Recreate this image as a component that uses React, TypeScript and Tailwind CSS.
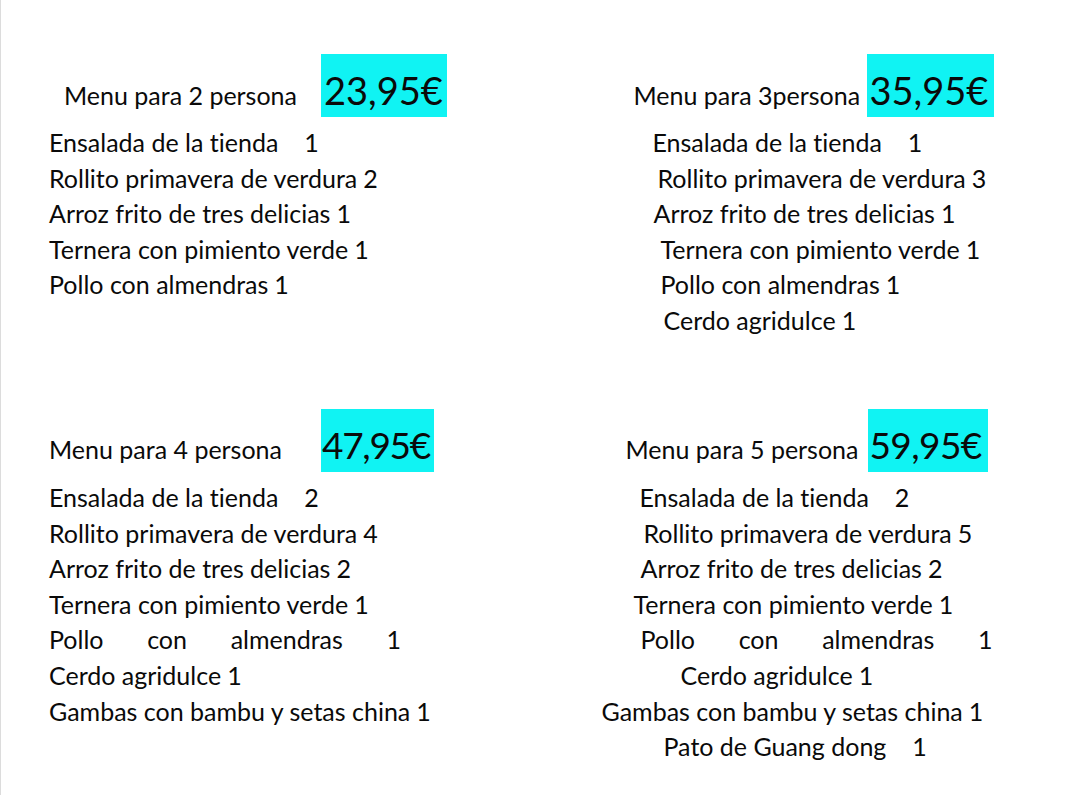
type Item = { text: string; qty: string; indent: string; gap?: string }

interface Menu {
  title: string
  price: string
  labelBox: string
  priceBox: string
  items: Item[]
  spread?: string
}

const menus: Menu[] = [
  {
    title: 'Menu para 2 persona',
    price: '23,95€',
    labelBox: 'ml-[63px] w-[257px]',
    priceBox: 'w-[126px] pl-[3px] text-[38px]',
    items: [
      { text: 'Ensalada de la tienda', qty: '1', indent: 'ml-[48px]', gap: 'ml-[26px]' },
      { text: 'Rollito primavera de verdura', qty: '2', indent: 'ml-[48px]' },
      { text: 'Arroz frito de tres delicias', qty: '1', indent: 'ml-[48px]' },
      { text: 'Ternera con pimiento verde', qty: '1', indent: 'ml-[48px]' },
      { text: 'Pollo con almendras', qty: '1', indent: 'ml-[48px]' },
    ],
  },
  {
    title: 'Menu para 3persona',
    price: '35,95€',
    labelBox: 'ml-[93px] w-[233px]',
    priceBox: 'w-[127px] pl-[3px] text-[38px]',
    items: [
      { text: 'Ensalada de la tienda', qty: '1', indent: 'ml-[112px]', gap: 'ml-[26px]' },
      { text: 'Rollito primavera de verdura', qty: '3', indent: 'ml-[117px]' },
      { text: 'Arroz frito de tres delicias', qty: '1', indent: 'ml-[113px]' },
      { text: 'Ternera con pimiento verde', qty: '1', indent: 'ml-[120px]' },
      { text: 'Pollo con almendras', qty: '1', indent: 'ml-[120px]' },
      { text: 'Cerdo agridulce', qty: '1', indent: 'ml-[123px]' },
    ],
  },
  {
    title: 'Menu para 4 persona',
    price: '47,95€',
    labelBox: 'ml-[48px] w-[272px]',
    priceBox: 'w-[113px] pl-[1px] text-[37px] tracking-[-1.3px]',
    spread: 'ml-[48px]',
    items: [
      { text: 'Ensalada de la tienda', qty: '2', indent: 'ml-[48px]', gap: 'ml-[26px]' },
      { text: 'Rollito primavera de verdura', qty: '4', indent: 'ml-[48px]' },
      { text: 'Arroz frito de tres delicias', qty: '2', indent: 'ml-[48px]' },
      { text: 'Ternera con pimiento verde', qty: '1', indent: 'ml-[48px]' },
      { text: 'Pollo con almendras', qty: '1', indent: 'spread' },
      { text: 'Cerdo agridulce', qty: '1', indent: 'ml-[48px]' },
      { text: 'Gambas con bambu y setas china', qty: '1', indent: 'ml-[48px]' },
    ],
  },
  {
    title: 'Menu para 5 persona',
    price: '59,95€',
    labelBox: 'ml-[85px] w-[242px]',
    priceBox: 'w-[120px] pl-[2px] text-[37px] tracking-[-0.6px]',
    spread: 'ml-[100px]',
    items: [
      { text: 'Ensalada de la tienda', qty: '2', indent: 'ml-[99px]', gap: 'ml-[26px]' },
      { text: 'Rollito primavera de verdura', qty: '5', indent: 'ml-[103px]' },
      { text: 'Arroz frito de tres delicias', qty: '2', indent: 'ml-[100px]' },
      { text: 'Ternera con pimiento verde', qty: '1', indent: 'ml-[93px]' },
      { text: 'Pollo con almendras', qty: '1', indent: 'spread' },
      { text: 'Cerdo agridulce', qty: '1', indent: 'ml-[140px]' },
      { text: 'Gambas con bambu y setas china', qty: '1', indent: 'ml-[61px]' },
      { text: 'Pato de Guang dong', qty: '1', indent: 'ml-[123px]', gap: 'ml-[26px]' },
    ],
  },
]

function MenuBlock({ menu }: { menu: Menu }) {
  return (
    <section className="whitespace-nowrap">
      <div className="flex items-baseline">
        <span className={`shrink-0 ${menu.labelBox}`}>{menu.title}</span>
        <span
          className={`h-[63px] shrink-0 overflow-hidden bg-[#10f3f3] pt-[9px] leading-[54px] ${menu.priceBox}`}
        >
          {menu.price}
        </span>
      </div>
      <ul className="mt-[8px]">
        {menu.items.map((item) =>
          item.indent === 'spread' ? (
            <li key={item.text} className={`flex w-[352px] justify-between ${menu.spread}`}>
              {item.text.split(' ').map((w) => (
                <span key={w}>{w}</span>
              ))}
              <span>{item.qty}</span>
            </li>
          ) : (
            <li key={item.text} className={item.indent}>
              {item.text}
              <span className={item.gap ?? 'ml-[6px]'}>{item.qty}</span>
            </li>
          ),
        )}
      </ul>
    </section>
  )
}

export default function App() {
  return (
    <div className="min-h-[795px] border-l border-[#dcdcdc] bg-white pt-[54px] font-['Lato',sans-serif] text-[25px] leading-[35.6px] text-[#0a0a0a] [font-variant-ligatures:none]">
      <div className="grid grid-cols-2 grid-rows-[355px_auto]">
        {menus.map((m) => (
          <MenuBlock key={m.title} menu={m} />
        ))}
      </div>
    </div>
  )
}
